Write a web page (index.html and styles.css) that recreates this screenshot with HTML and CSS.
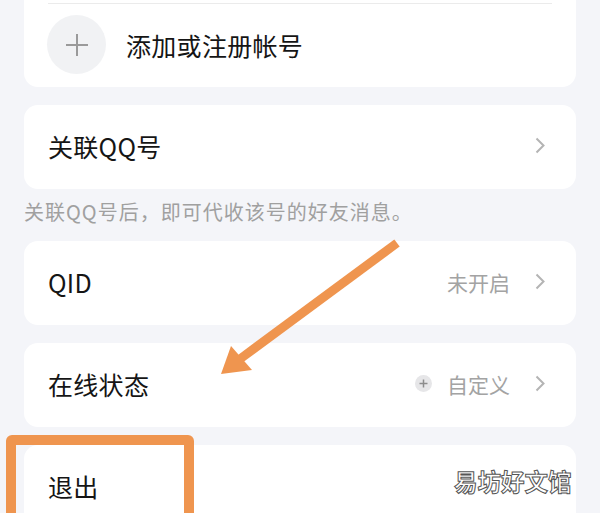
FILE: index.html
```html
<!DOCTYPE html>
<html lang="zh-CN">
<head>
  <meta charset="UTF-8">
  <title>帐号设置</title>
  <link rel="stylesheet" href="styles.css">
</head>
<body>

<div class="page">
  <div class="card card-cut">
    <div class="row row-add">
      <span class="add-icon">
        <svg width="24" height="24" viewBox="0 0 24 24"><path d="M12 1v22M1 12h22" stroke="#9a9a9a" stroke-width="2"/></svg>
      </span>
      <span class="label">添加或注册帐号</span>
    </div>
  </div>

  <div class="card">
    <div class="row">
      <span class="label">关联QQ号</span>
      <span class="chevron"><svg width="10" height="17" viewBox="0 0 10 17"><path d="M1.5 1.5l7 7-7 7" fill="none" stroke="#b4b4b4" stroke-width="2"/></svg></span>
    </div>
  </div>
  <p class="hint">关联QQ号后，即可代收该号的好友消息。</p>

  <div class="card">
    <div class="row">
      <span class="label">QID</span>
      <span class="value">未开启</span>
      <span class="chevron"><svg width="10" height="17" viewBox="0 0 10 17"><path d="M1.5 1.5l7 7-7 7" fill="none" stroke="#b4b4b4" stroke-width="2"/></svg></span>
    </div>
  </div>

  <div class="card gap">
    <div class="row">
      <span class="label">在线状态</span>
      <span class="mini-plus">
        <svg width="9" height="9" viewBox="0 0 9 9"><path d="M4.5 0.5v8M0.5 4.5h8" stroke="#8c8c8c" stroke-width="1.5"/></svg>
      </span>
      <span class="value">自定义</span>
      <span class="chevron"><svg width="10" height="17" viewBox="0 0 10 17"><path d="M1.5 1.5l7 7-7 7" fill="none" stroke="#b4b4b4" stroke-width="2"/></svg></span>
    </div>
  </div>

  <div class="card gap">
    <div class="row">
      <span class="label">退出</span>
    </div>
  </div>
</div>

<!-- annotations drawn over the screenshot -->
<svg class="arrow" width="600" height="513" viewBox="0 0 600 513">
  <line x1="397" y1="243" x2="240" y2="359" stroke="#ef954f" stroke-width="9" stroke-linecap="butt"/>
  <polygon points="221,374 231,346 252,370" fill="#ef954f"/>
</svg>
<div class="box-mark"></div>
<div class="watermark">易坊好文馆</div>

</body>
</html>
```

FILE: styles.css
```css
* {
  box-sizing: border-box;
  margin: 0;
  padding: 0;
}

body {
  font-family: "Noto Sans CJK SC", "Noto Sans", sans-serif;
  background: #f4f5f9;
  color: #151515;
  height: 513px;
  overflow: hidden;
  position: relative;
}

.page {
  padding: 0 24px;
}

.card {
  background: #fff;
  border-radius: 14px;
}

.card-cut {
  border-radius: 0 0 14px 14px;
  padding-top: 3px;
  margin-bottom: 18px;
}

.card.gap {
  margin-top: 18px;
}

.row {
  height: 84px;
  display: flex;
  align-items: center;
  padding: 0 24px 3px;
}

.row-add {
  border-top: 1px solid #ebebeb;
  margin: 0 24px;
  padding: 0 0 2px;
}

.add-icon {
  width: 59px;
  height: 59px;
  border-radius: 50%;
  background: #f1f2f4;
  display: flex;
  align-items: center;
  justify-content: center;
  margin-left: -1px;
  margin-right: 20px;
}

.label {
  font-size: 25px;
  flex: 1;
  letter-spacing: 0.3px;
}

.value {
  font-size: 21px;
  color: #a3a3a3;
  margin-right: 25px;
  letter-spacing: 0;
}

.mini-plus {
  width: 17px;
  height: 17px;
  border-radius: 50%;
  background: #e6e6e8;
  display: flex;
  align-items: center;
  justify-content: center;
  margin-right: 15px;
}

.chevron {
  display: flex;
  margin-right: 7px;
}

.hint {
  font-size: 20px;
  color: #a0a0a0;
  line-height: 31px;
  padding: 7px 0 14px;
  letter-spacing: 1px;
}

.arrow {
  position: absolute;
  left: 0;
  top: 0;
  pointer-events: none;
}

.box-mark {
  position: absolute;
  left: 6px;
  top: 435px;
  width: 188px;
  height: 120px;
  border: 10px solid #ef954f;
  border-radius: 6px;
}

.watermark {
  position: absolute;
  left: 454px;
  top: 464px;
  font-size: 23.5px;
  color: #fff;
  -webkit-text-stroke: 1px #555;
  font-weight: bold;
  letter-spacing: 0;
}
```
